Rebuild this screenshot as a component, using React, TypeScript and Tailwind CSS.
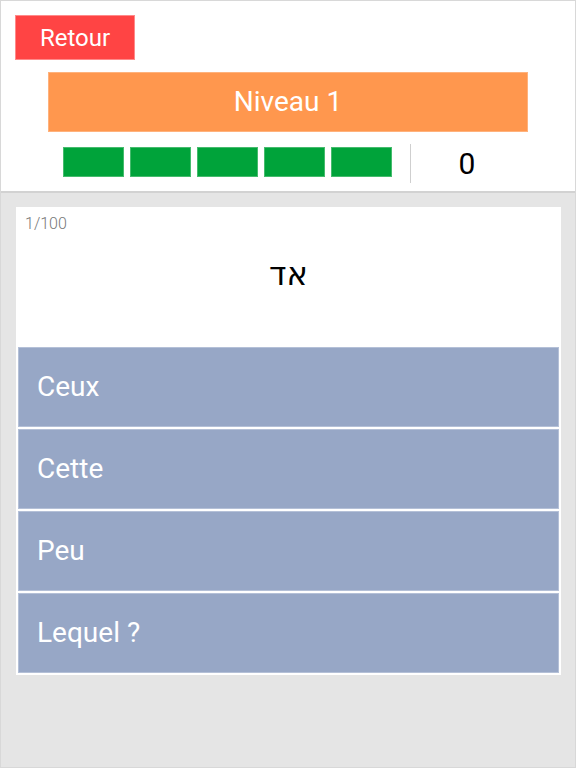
const options = ["Ceux", "Cette", "Peu", "Lequel ?"];

export default function App() {
  return (
    <div
      className="w-[576px] h-[768px] bg-[#e5e5e5] border border-[#d8d8d8] overflow-hidden"
      style={{ fontFamily: "Roboto, 'Liberation Sans', sans-serif" }}
    >
      <header className="bg-white border-b-2 border-[#d2d2d2] pt-[14px] pb-[8px]">
        <div className="pl-[14px]">
          <button className="w-[120px] h-[45px] bg-[#ff4444] border border-[#ff8a8a] text-white text-[24px] leading-none flex items-center justify-center">
            Retour
          </button>
        </div>
        <div className="ml-[47px] mt-[12px] w-[480px] h-[60px] bg-[#ff974e] border border-[#ffb27c] text-white text-[28px] leading-none flex items-center justify-center">
          Niveau 1
        </div>
        <div className="ml-[47px] mt-[12px] w-[480px] h-[39px] flex">
          <div className="w-[362px] flex pl-[15px] pt-[3px] gap-[6px]">
            {[0, 1, 2, 3, 4].map((i) => (
              <div
                key={i}
                className="w-[61px] h-[30px] bg-[#00a33a] border border-[#45bb6d]"
              />
            ))}
          </div>
          <div className="w-px h-[39px] bg-[#cfcfcf]" />
          <div className="flex-1 flex items-center justify-center pr-[5px] text-[30px] leading-none text-black">
            0
          </div>
        </div>
      </header>

      <main className="pt-[14px]">
        <div className="ml-[15px] w-[545px] bg-white pb-[2px]">
          <div className="h-[140px] pt-[9px]">
            <div className="pl-[9px] text-[16px] leading-none font-light text-[#777777]">
              1/100
            </div>
            <div
              className="mt-[26px] text-center text-[32px] leading-none text-black"
              dir="rtl"
              style={{ fontFamily: "'DejaVu Sans', 'Noto Sans', sans-serif" }}
            >
              אד
            </div>
          </div>
          <div className="px-[2px] flex flex-col gap-[2px]">
            {options.map((o) => (
              <div
                key={o}
                className="h-[80px] bg-[#97a7c6] border border-[#b4c0d7] flex items-center pl-[18px] text-white text-[28px] leading-none"
              >
                {o}
              </div>
            ))}
          </div>
        </div>
      </main>
    </div>
  );
}
